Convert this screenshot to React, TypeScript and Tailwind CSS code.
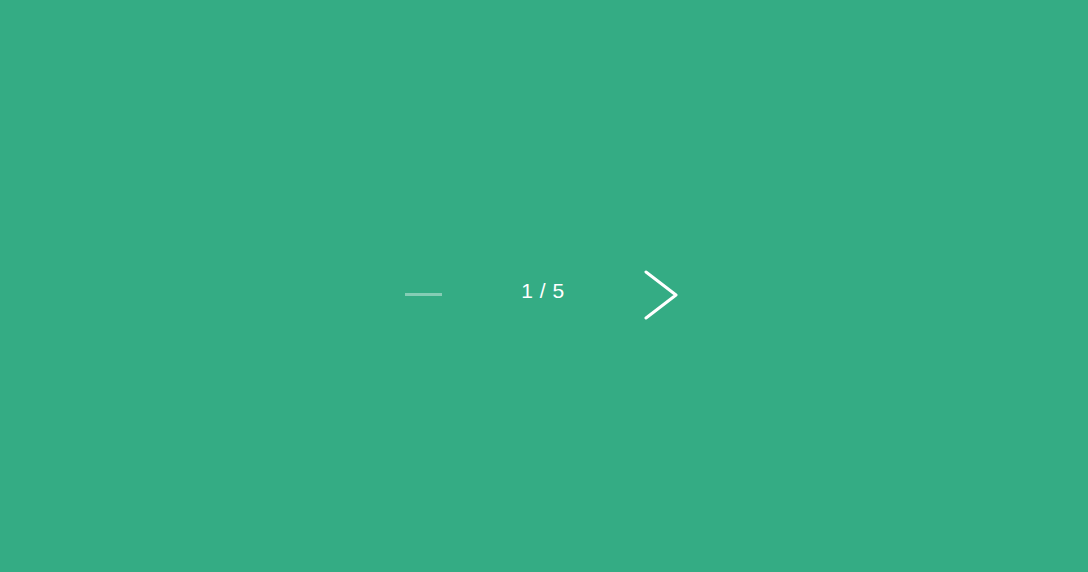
import { useState } from "react";

const TOTAL = 5;

export default function App() {
  const [page, setPage] = useState(1);

  return (
    <div
      className="w-full h-[572px] bg-[#34ac84] flex items-center justify-center pt-[17px] pr-[6px]"
      style={{ fontFamily: "'Liberation Sans', Arial, sans-serif" }}
    >
      <div className="flex items-center h-[48px]">
        <button
          onClick={() => setPage(p => Math.max(1, p - 1))}
          className="w-[80px] h-[48px] flex items-center justify-center"
        >
          <span className="block w-[37px] h-[3px] bg-white/40" />
        </button>

        <div className="w-[160px] h-[48px] flex items-center justify-center pb-[7px]">
          <span className="text-[21px] text-white tracking-[0.5px]">
            {page} / {TOTAL}
          </span>
        </div>

        {/* Next */}
        <button
          onClick={() => setPage(p => Math.min(TOTAL, p + 1))}
          className="w-[76px] h-[48px] flex items-center justify-center"
        >
          <svg width="34" height="50" viewBox="0 0 34 50" fill="none">
            <polyline
              points="2,2 32,25 2,48"
              stroke="#ffffff"
              strokeWidth="3"
              strokeLinecap="round"
              strokeLinejoin="round"
            />
          </svg>
        </button>
      </div>
    </div>
  );
}
